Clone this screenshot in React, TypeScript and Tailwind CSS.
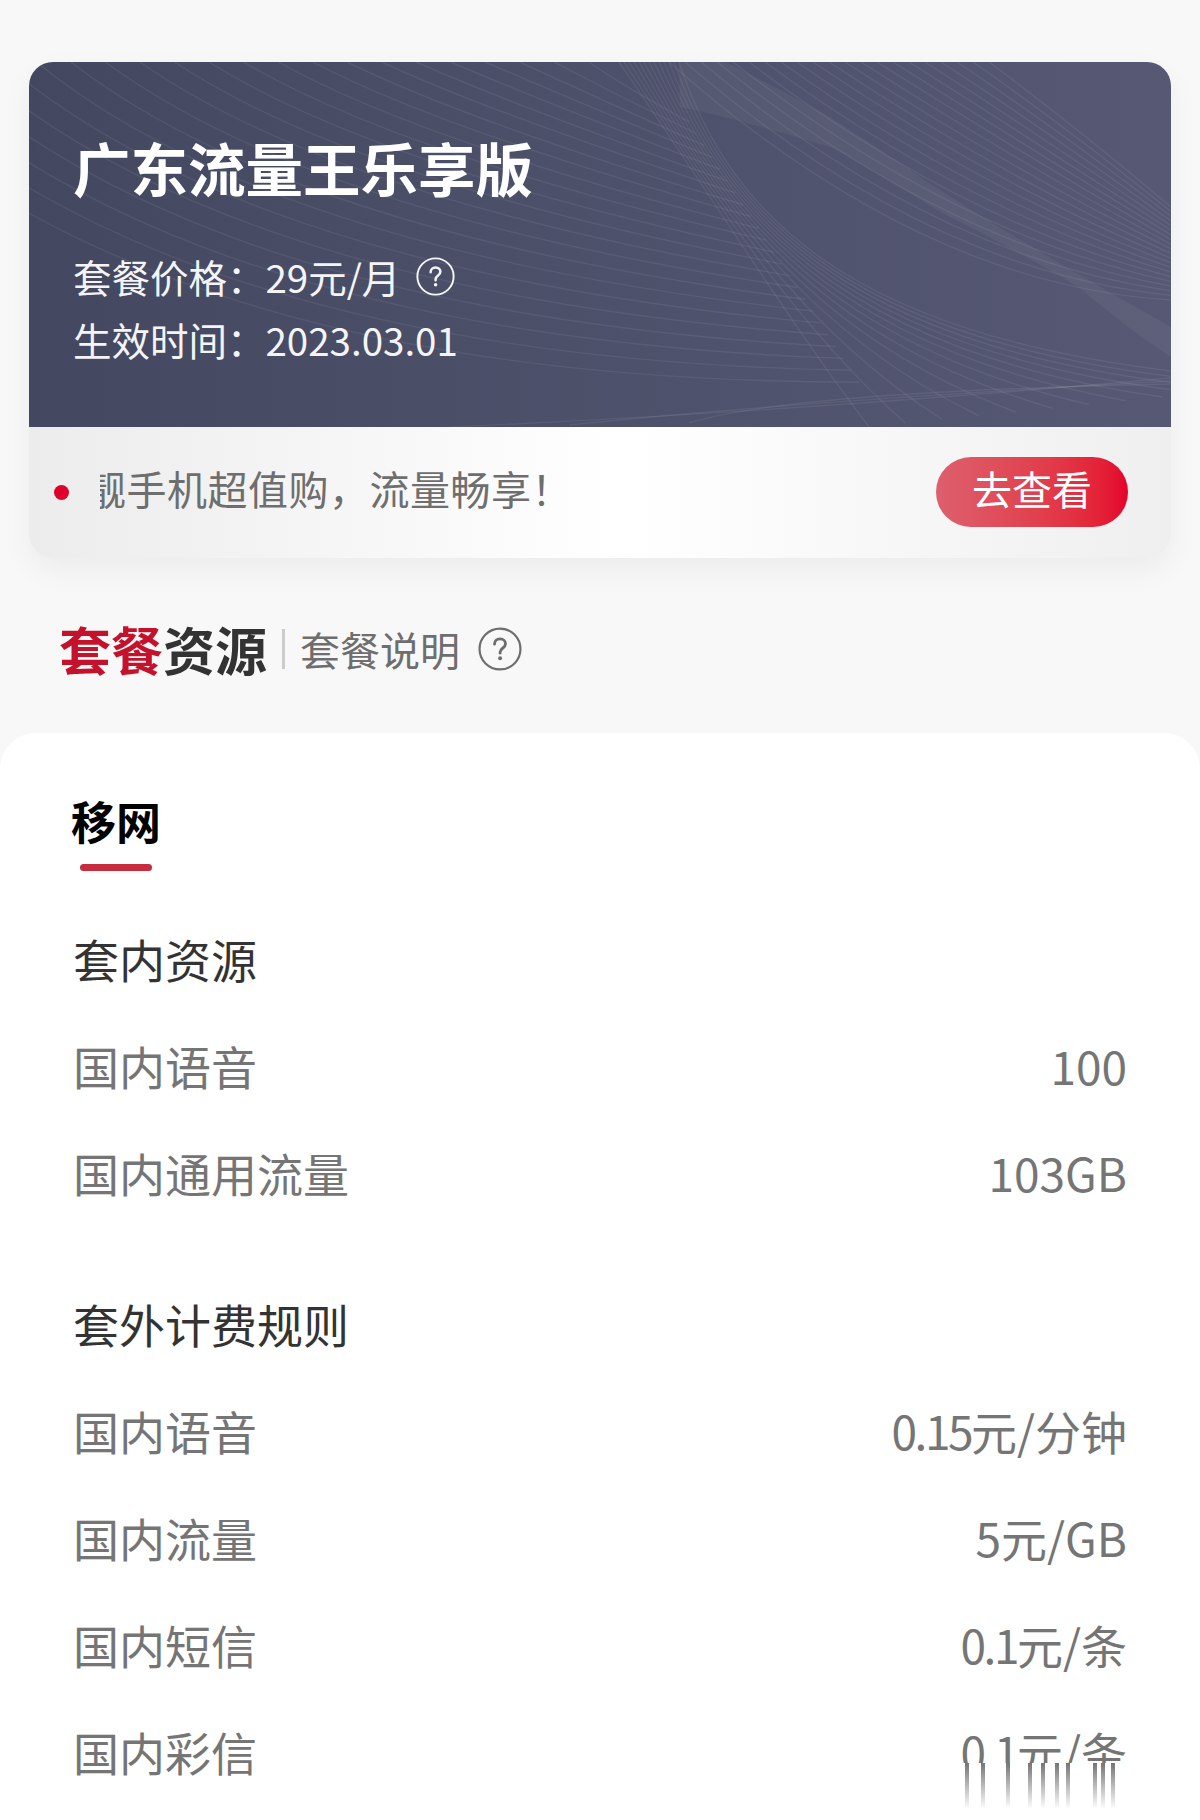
const cjk = "font-['Noto_Sans_CJK_SC','Noto_Sans',sans-serif]";

function Help({ color, size }: { color: string; size: number }) {
  return (
    <svg width={size} height={size} viewBox="0 0 40 40" fill="none" className="shrink-0">
      <circle cx="20" cy="20" r="18.6" stroke={color} strokeWidth="2" />
      <path d="M15 15.6c0-2.9 2.1-4.8 5-4.8s5 1.8 5 4.4c0 2-1.1 3-2.6 4.1-1.4 1-2.3 1.9-2.3 3.6v.9" stroke={color} strokeWidth="2.6" strokeLinecap="round" />
      <circle cx="20.1" cy="28.4" r="1.8" fill={color} />
    </svg>
  );
}

const lerp = (a: number, b: number, t: number) => a + (b - a) * t;

function Waves() {
  const paths: string[] = [];
  for (let i = 0; i <= 22; i++) {
    const t = i / 22;
    const sx = lerp(560, -200, t);
    const ex = lerp(660, 830, t);
    const ey = lerp(60, 320, t);
    const s = lerp(0.55, 0, Math.pow(t, 0.7));
    const cx = sx + 0.3 * (ex - sx);
    const cy = ey - (ex - cx) * s;
    paths.push(`M${sx} 0 Q${cx} ${cy} ${ex} ${ey}`);
  }
  for (let i = 0; i <= 20; i++) {
    const t = i / 20;
    const sx = lerp(640, 960, t);
    const ey = lerp(238, 145, t);
    const s = lerp(0.06, 0.85, t);
    const cx = sx + 0.5 * (1142 - sx);
    const cy = ey - s * (1142 - cx);
    paths.push(`M${sx} 0 Q${cx} ${cy} 1142 ${ey}`);
  }
  for (let i = 0; i <= 12; i++) {
    const t = i / 12;
    paths.push(
      `M${lerp(590, 650, t)} 0 C${680 + 20 * t} ${130 + 20 * t}, ${760 + 60 * t} ${260 + 40 * t}, ${840 + 440 * t} ${365 - 45 * t}`,
    );
  }
  for (let i = 0; i < 3; i++) {
    paths.push(`M${420 + i * 120} ${365 - i * 2} Q${760} ${350 - i * 10} 1142 ${316 + i * 3}`);
  }
  return (
    <svg className="absolute inset-0 h-full w-full" viewBox="0 0 1142 365" fill="none">
      <path
        d="M650 0 L697 0 C 740 22 770 38 801 55 C 840 80 870 100 900 121 C 930 140 960 160 992 178 C 1040 208 1090 235 1142 265 L1142 295 C 1110 275 1080 250 1049 225 C 1000 195 950 170 908 148 C 870 125 840 105 801 85 C 750 70 700 55 651 45 Z"
        fill="#ffffff"
        fillOpacity="0.045"
      />
      {paths.map((p, i) => (
        <path key={i} d={p} stroke="#ffffff" strokeOpacity="0.065" strokeWidth="1.4" />
      ))}
    </svg>
  );
}

function Row({ k, v, dark }: { k: string; v?: React.ReactNode; dark?: boolean }) {
  return (
    <div className={`flex h-[107px] items-center justify-between text-[46px] leading-none ${dark ? "text-[#333333]" : "text-[#757575]"}`}>
      <span>{k}</span>
      {v && <span>{v}</span>}
    </div>
  );
}

const Dec = ({ children }: { children: string }) => <span className="tracking-[-2.5px]">{children}</span>;

export default function App() {
  return (
    <div className={`${cjk} relative h-[1820px] w-[1200px] overflow-hidden bg-[#f8f8f8]`}>
      <div className="px-[29px] pt-[62px]">
        <div className="overflow-hidden rounded-[24px] shadow-[0_12px_30px_rgba(0,0,0,0.05)]">
          <div className="relative h-[365px] bg-gradient-to-r from-[#434860] to-[#575974] pl-[44px] pt-[65px] text-white">
            <Waves />
            <div className="relative">
              <div className="text-[57.5px] font-semibold leading-[80px]">广东流量王乐享版</div>
              <div className="mt-[38px] flex h-[63px] items-center text-[38.5px] leading-none text-[#f4f4f6]">
                <span>套餐价格：29元/月</span>
                <span className="ml-[16px]"><Help color="#f4f4f6" size={39} /></span>
              </div>
              <div className="flex h-[63px] items-center text-[38.5px] leading-none text-[#f4f4f6]">生效时间：2023.03.01</div>
            </div>
          </div>
          <div className="flex h-[131px] items-center bg-gradient-to-r from-[#ececec] via-[#ffffff] via-[52%] to-[#efefef] pl-[25px] pr-[43px]">
            <span className="h-[15px] w-[15px] shrink-0 rounded-full bg-[#e1002b]" />
            <span className="ml-[31px] flex-1 overflow-hidden pb-[9px] text-[40px] leading-[48px] tracking-[0.5px] whitespace-nowrap text-[#6e6e6e]">
              <span className="-ml-[14px] block">靓手机超值购，流量畅享！</span>
            </span>
            <span className="mb-[1px] flex h-[70px] w-[192px] shrink-0 items-center justify-center rounded-full bg-gradient-to-r from-[#dd5f6e] to-[#e4002b] pb-[8px] text-[40px] leading-none text-white">去查看</span>
          </div>
        </div>
      </div>
      <div className="flex h-[175px] items-center pl-[59px] pt-[7px]">
        <span className="text-[52px] font-semibold leading-none text-[#c4122d]">套餐</span>
        <span className="text-[52px] font-semibold leading-none text-[#333333]">资源</span>
        <span className="mx-[15px] h-[40px] w-[3px] bg-[#cccccc]" />
        <span className="text-[40px] leading-none text-[#6e6e6e]">套餐说明</span>
        <span className="ml-[18px]"><Help color="#6e6e6e" size={44} /></span>
      </div>
      <div className="h-[1200px] rounded-t-[36px] bg-white px-[73px]">
        <div className="-ml-[2px] w-fit pt-[60px]">
          <div className="text-[45px] font-semibold leading-[56px] text-black">移网</div>
          <div className="mx-auto mt-[15px] h-[7px] w-[72px] rounded-full bg-[#c72c3f]" />
        </div>
        <div className="mt-[33px]">
          <Row k="套内资源" dark />
          <Row k="国内语音" v="100" />
          <Row k="国内通用流量" v="103GB" />
        </div>
        <div className="mt-[44px]">
          <Row k="套外计费规则" dark />
          <Row k="国内语音" v={<><Dec>0.15</Dec>元/分钟</>} />
          <Row k="国内流量" v="5元/GB" />
          <Row k="国内短信" v={<><Dec>0.1</Dec>元/条</>} />
          <Row k="国内彩信" v={<><Dec>0.1</Dec>元/条</>} />
        </div>
      </div>
      <svg className="absolute left-[950px] top-[1763px]" width="180" height="57" viewBox="0 0 180 57">
        <defs>
          <linearGradient id="smear" x1="0" y1="0" x2="0" y2="1">
            <stop offset="0" stopColor="#757575" />
            <stop offset="1" stopColor="#757575" stopOpacity="0" />
          </linearGradient>
        </defs>
        <rect width="180" height="57" fill="#ffffff" />
        {[17, 33, 58, 80, 93, 107, 118, 145, 153, 163].map((x) => (
          <rect key={x} x={x - 2} y="0" width="4" height="46" fill="url(#smear)" />
        ))}
      </svg>
    </div>
  );
}
